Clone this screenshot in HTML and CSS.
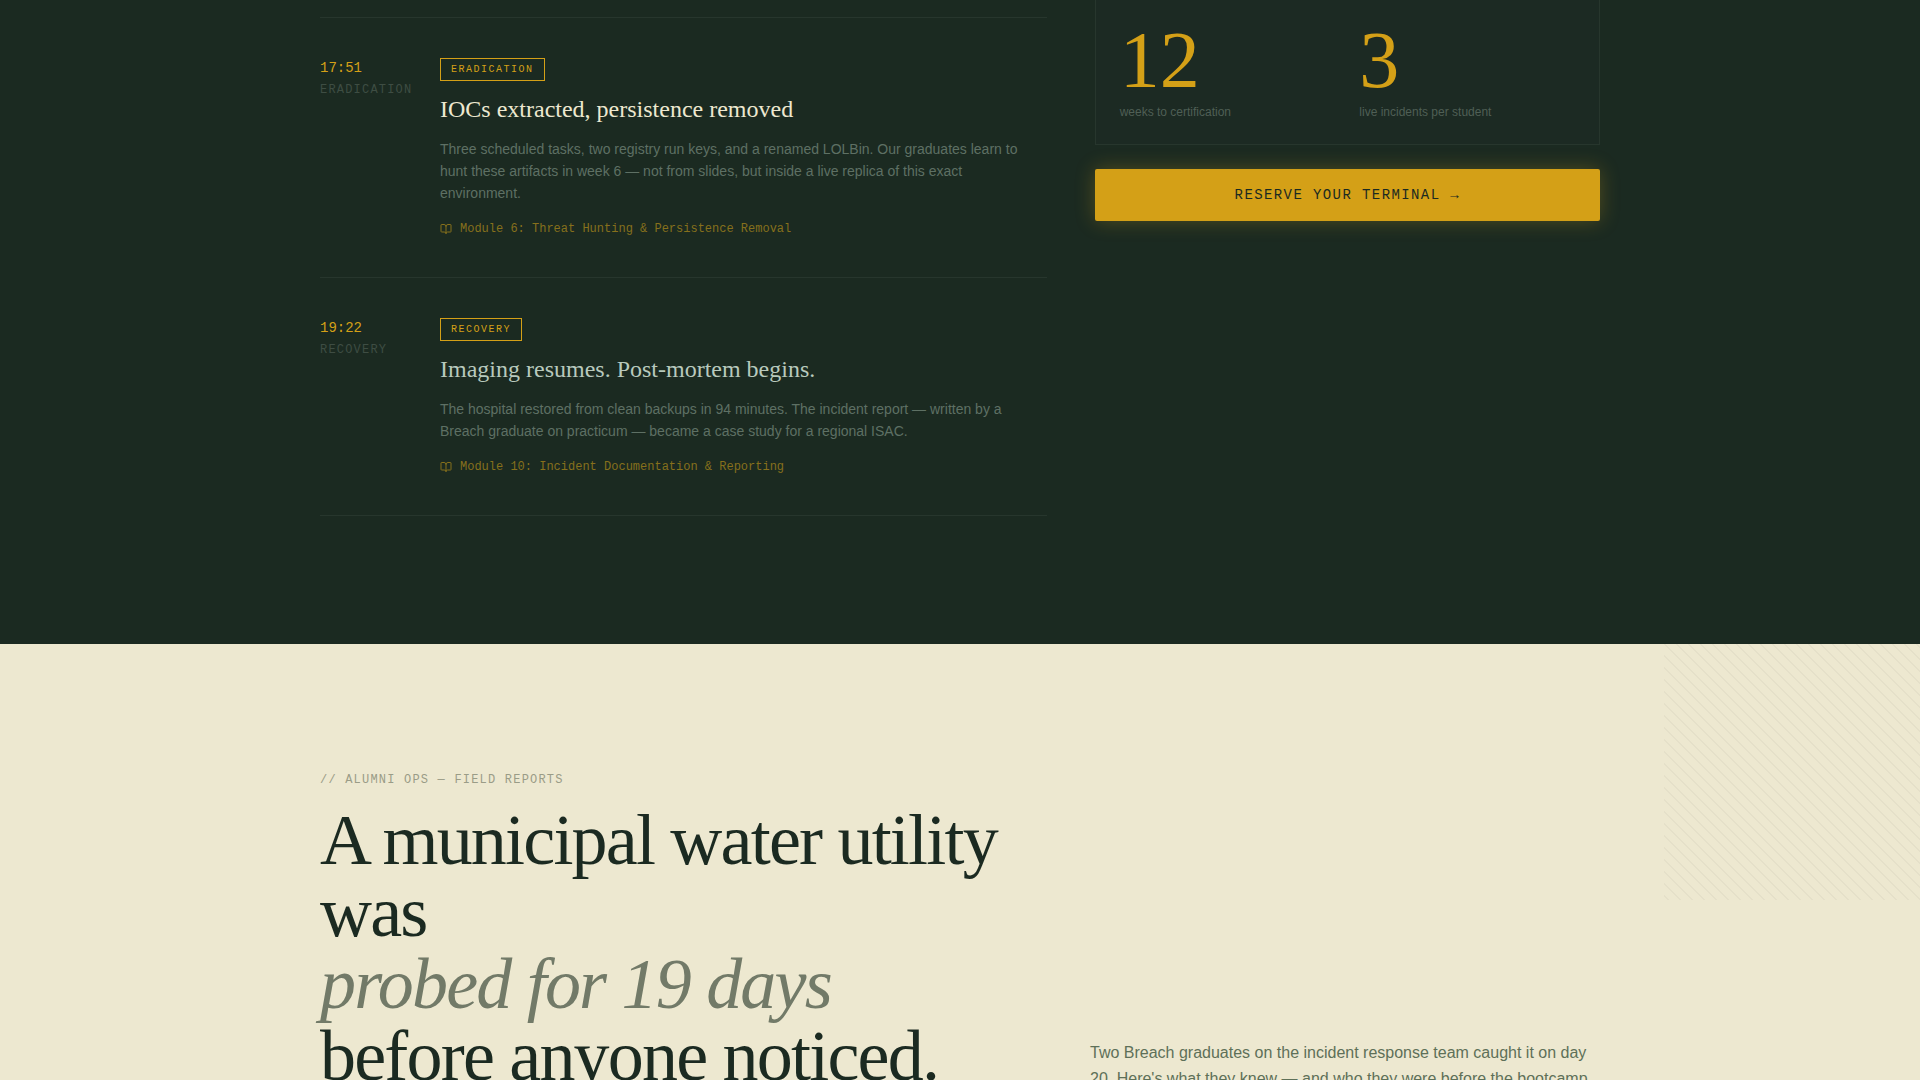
FILE: index.html
```html
<!DOCTYPE html>
<html lang="en">
<head>
<meta charset="utf-8">
<meta name="viewport" content="width=device-width, initial-scale=1">
<title>Breach — Incident Response Bootcamp</title>
<link rel="stylesheet" href="styles.css">
</head>
<body>
<svg width="0" height="0" class="sprite" aria-hidden="true">
  <symbol id="book" viewBox="0 0 24 24">
    <path d="M12 7v14"/>
    <path d="M3 18a1 1 0 0 1-1-1V4a1 1 0 0 1 1-1h5a4 4 0 0 1 4 4 4 4 0 0 1 4-4h5a1 1 0 0 1 1 1v13a1 1 0 0 1-1 1h-6a3 3 0 0 0-3 3 3 3 0 0 0-3-3z"/>
  </symbol>
</svg>
<main>
  <section class="incident">
    <div class="container incident-grid">
      <div class="timeline">
        <article class="event">
          <div class="stamp">
            <time class="time" datetime="17:51">17:51</time>
            <div class="phase">ERADICATION</div>
          </div>
          <div class="event-body">
            <span class="badge">ERADICATION</span>
            <h3 class="event-title">IOCs extracted, persistence removed</h3>
            <p class="event-text">Three scheduled tasks, two registry run keys, and a renamed LOLBin. Our graduates learn to hunt these artifacts in week 6 — not from slides, but inside a live replica of this exact environment.</p>
            <div class="module"><svg class="icon" aria-hidden="true"><use href="#book"/></svg><span>Module 6: Threat Hunting &amp; Persistence Removal</span></div>
          </div>
        </article>
        <article class="event">
          <div class="stamp">
            <time class="time" datetime="19:22">19:22</time>
            <div class="phase">RECOVERY</div>
          </div>
          <div class="event-body">
            <span class="badge">RECOVERY</span>
            <h3 class="event-title event-title-muted">Imaging resumes. Post-mortem begins.</h3>
            <p class="event-text">The hospital restored from clean backups in 94 minutes. The incident report — written by a Breach graduate on practicum — became a case study for a regional ISAC.</p>
            <div class="module"><svg class="icon" aria-hidden="true"><use href="#book"/></svg><span>Module 10: Incident Documentation &amp; Reporting</span></div>
          </div>
        </article>
      </div>
      <aside class="sidebar">
        <div class="stats">
          <div>
            <div class="stat-number">12</div>
            <div class="stat-label">weeks to certification</div>
          </div>
          <div>
            <div class="stat-number">3</div>
            <div class="stat-label">live incidents per student</div>
          </div>
        </div>
        <button type="button" class="reserve">RESERVE YOUR TERMINAL →</button>
      </aside>
    </div>
  </section>
  <section class="alumni">
    <div class="hatch"></div>
    <div class="container">
      <div class="eyebrow">// ALUMNI OPS — FIELD REPORTS</div>
      <div class="alumni-grid">
        <h2 class="headline">A municipal water utility was<br><em>probed for 19 days</em><br>before anyone noticed.</h2>
        <p class="lede">Two Breach graduates on the incident response team caught it on day 20. Here's what they knew — and who they were before the bootcamp.</p>
      </div>
    </div>
  </section>
</main>
</body>
</html>
```
FILE: styles.css
```css
:root {
  --forest: #1b2a21;
  --cream: #ede8d0;
  --gold: #d4a017;
  --line: #27362d;
  --serif: "Liberation Serif", "Times New Roman", serif;
  --sans: "Liberation Sans", Arial, sans-serif;
  --mono: "Liberation Mono", "Courier New", monospace;
}

* {
  box-sizing: border-box;
  margin: 0;
}

body {
  background: var(--cream);
  font-family: var(--sans);
}

.sprite {
  position: absolute;
}

.container {
  max-width: 1280px;
  margin: 0 auto;
}

/* Incident timeline */

.incident {
  background: var(--forest);
  padding-bottom: 128px;
}

.incident-grid {
  display: grid;
  grid-template-columns: repeat(12, 1fr);
  column-gap: 48px;
  align-items: start;
}

.timeline {
  grid-column: span 7;
  padding-top: 17px;
}

.event {
  display: grid;
  grid-template-columns: 96px 1fr;
  column-gap: 24px;
  padding: 40px 0 39px;
  border-bottom: 1px solid var(--line);
}

.event:first-child {
  border-top: 1px solid var(--line);
}

.time {
  display: block;
  font: 14px/20px var(--mono);
  color: var(--gold);
}

.phase {
  margin-top: 3px;
  font: 12px/18px var(--mono);
  letter-spacing: 0.1em;
  color: #3e4d43;
}

.event-body {
  display: flex;
  flex-direction: column;
  align-items: flex-start;
}

.badge {
  padding: 3px 10px;
  border: 1px solid var(--gold);
  font: 10px/15px var(--mono);
  letter-spacing: 0.15em;
  color: var(--gold);
}

.event-title {
  margin-top: 12px;
  font: 24px/32px var(--serif);
  color: var(--cream);
}

.event-title-muted {
  color: #b8c9bd;
}

.event-text {
  margin-top: 13px;
  max-width: 580px;
  font-size: 14px;
  line-height: 22px;
  color: #5e7064;
}

.module {
  display: flex;
  align-items: center;
  gap: 8px;
  margin-top: 16px;
  font: 12px/18px var(--mono);
  color: #86701c;
}

.icon {
  width: 12px;
  height: 12px;
  fill: none;
  stroke: currentColor;
  stroke-width: 2;
  stroke-linecap: round;
  stroke-linejoin: round;
}

/* Sidebar */

.sidebar {
  grid-column: span 5;
}

.stats {
  display: grid;
  grid-template-columns: 1fr 1fr;
  gap: 24px;
  padding: 20px 24px 24px;
  border: 1px solid var(--line);
  border-top: 0;
  background: #1c2a23;
}

.stat-number {
  font: 80px/80px var(--serif);
  color: var(--gold);
}

.stat-label {
  margin-top: 4px;
  font-size: 12px;
  line-height: 16px;
  color: #4f5f55;
}

.reserve {
  width: 100%;
  margin-top: 24px;
  padding: 16px;
  border: 0;
  border-radius: 2px;
  background: var(--gold);
  box-shadow: 0 0 20px rgba(212, 160, 23, 0.3);
  font: 14px/20px var(--mono);
  letter-spacing: 0.1em;
  color: var(--forest);
  cursor: pointer;
}

/* Alumni */

.alumni {
  position: relative;
  padding: 128px 0;
}

.hatch {
  position: absolute;
  top: 0;
  right: 0;
  width: 256px;
  height: 256px;
  opacity: 0.04;
  background-image: repeating-linear-gradient(45deg, var(--forest) 0, var(--forest) 1px, transparent 0, transparent 50%);
  background-size: 12px 12px;
}

.eyebrow {
  font: 12px/16px var(--mono);
  letter-spacing: 0.1em;
  color: #9a9c87;
}

.alumni-grid {
  display: grid;
  grid-template-columns: 730fr 510fr;
  column-gap: 40px;
  align-items: end;
  margin-top: 16px;
}

.headline {
  font: 72px/72px var(--serif);
  font-weight: 400;
  letter-spacing: -0.025em;
  color: var(--forest);
}

.headline em {
  color: #727a68;
}

.lede {
  font-size: 16px;
  line-height: 26px;
  color: #5e7058;
}
```
